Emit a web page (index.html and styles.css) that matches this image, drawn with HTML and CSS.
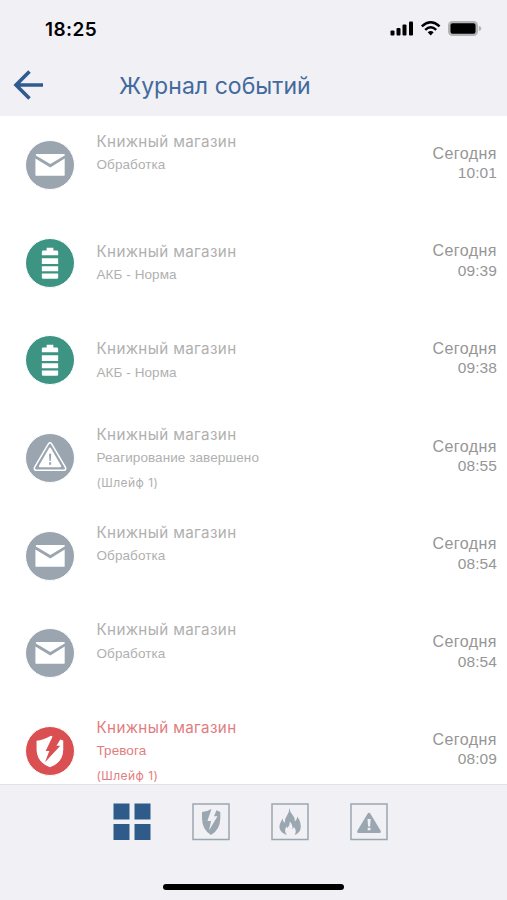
FILE: index.html
```
<!DOCTYPE html>
<html lang="ru">
<head>
<meta charset="utf-8">
<title>Журнал событий</title>
<link rel="stylesheet" href="styles.css">
</head>
<body>
<svg class="defs" width="0" height="0">
  <symbol id="mail" viewBox="0 0 50 50"><path d="M10.300 13.500h30v1.700L25.300 24 10.300 15.200z"/><path d="M9.800 18.200L25.300 27.500 40.300 18.200V35.300q0 1-1 1h-28.500q-1 0-1-1z"/></symbol>
  <symbol id="battery" viewBox="0 0 50 50"><path d="M21.500 9h7v3H32q1.500 0 1.500 1.500V17h-17v-3.500Q16.500 12 18 12h3.500zM16.500 20h17v6h-17zM16.500 28.500h17v5h-17zM16.500 36h17v4q0 1.500-1.500 1.500H18q-1.500 0-1.500-1.500z"/></symbol>
  <symbol id="warning" viewBox="0 0 50 50"><path d="M23.300 10.300Q25 8 26.700 10.300L41 34.500Q42.200 37.500 39.500 37.700H10.500Q7.800 37.500 9 34.500z" fill="none" stroke="#fff" stroke-width="1.600"/><path d="M25 14Q25.800 14 26.200 15L36.500 33Q37 34.500 35.500 34.700h-21Q13 34.500 13.500 33L23.800 15Q24.200 14 25 14z"/><path d="M23.900 20.500h2.400l-.5 7.500h-1.400zM24 29.500h2.200v2.500H24z" fill="#9aa5b0"/></symbol>
  <symbol id="shield" viewBox="0 0 50 50"><path d="M26 9.200Q17.500 14 11 14.200V24Q11.500 37 25 42 38.600 37 38.800 24V14L35.700 12.900 31.700 19.500h4L19.800 36.700 24.300 25H20.500L27.700 10z"/></symbol>
</svg>
<div class="screen">
  <header class="header">
    <div class="status">
      <span class="clock">18:25</span>
      <svg class="signals" width="94" height="20" viewBox="0 0 94 20">
        <rect x="1.500" y="11.500" width="4" height="5" rx="1"/><rect x="7.500" y="9" width="4" height="7.500" rx="1"/><rect x="13.500" y="5.500" width="4" height="11" rx="1"/><rect x="20" y="2.500" width="4" height="14" rx="1"/>
        <g fill="none" stroke="#000" stroke-width="2.400"><path d="M32.800 7.300Q41.700-.800 50.600 7.300"/><path d="M36.200 10.900Q41.700 5.700 47.200 10.900"/></g>
        <path d="M38.700 13.200Q41.700 10.600 44.700 13.200L41.700 16.500z"/>
        <rect x="59" y="2" width="30" height="15" rx="4.500" fill="#b4b4b7"/><path d="M89.800 7q2.500.4 2.500 2.500t-2.500 2.500z" fill="#b4b4b7"/><rect x="61.500" y="4.200" width="25" height="10.600" rx="2"/>
      </svg>
    </div>
    <div class="nav">
      <svg class="back" width="32" height="32" viewBox="0 0 32 32"><path d="M30 16H3M16.500 2.500L3 16 16.500 29.500" fill="none" stroke="#2f5b8f" stroke-width="3.600"/></svg>
      <h1>Журнал событий</h1>
    </div>
  </header>
  <main class="list">
    <article class="row"><svg class="icon gray"><use href="#mail"/></svg><div class="text"><h2>Книжный магазин</h2><p>Обработка</p><small></small></div><time>Сегодня<span>10:01</span></time></article>
    <article class="row"><svg class="icon green"><use href="#battery"/></svg><div class="text"><h2>Книжный магазин</h2><p>АКБ - Норма</p></div><time>Сегодня<span>09:39</span></time></article>
    <article class="row"><svg class="icon green"><use href="#battery"/></svg><div class="text"><h2>Книжный магазин</h2><p>АКБ - Норма</p></div><time>Сегодня<span>09:38</span></time></article>
    <article class="row"><svg class="icon gray"><use href="#warning"/></svg><div class="text"><h2>Книжный магазин</h2><p>Реагирование завершено</p><small>(Шлейф 1)</small></div><time>Сегодня<span>08:55</span></time></article>
    <article class="row"><svg class="icon gray"><use href="#mail"/></svg><div class="text"><h2>Книжный магазин</h2><p>Обработка</p><small></small></div><time>Сегодня<span>08:54</span></time></article>
    <article class="row"><svg class="icon gray"><use href="#mail"/></svg><div class="text"><h2>Книжный магазин</h2><p>Обработка</p><small></small></div><time>Сегодня<span>08:54</span></time></article>
    <article class="row alarm"><svg class="icon red"><use href="#shield"/></svg><div class="text"><h2>Книжный магазин</h2><p>Тревога</p><small>(Шлейф 1)</small></div><time>Сегодня<span>08:09</span></time></article>
  </main>
  <footer class="tabs">
    <nav class="tabbar">
      <svg class="tab" viewBox="0 0 38 38"><path d="M.500 .500h16v16h-16zM21.500 .500h16v16h-16zM.500 21h16v16h-16zM21.500 21h16v16h-16z" fill="#2f5b8b"/></svg>
      <svg class="tab boxed" viewBox="0 0 38 38"><rect class="frame" x="1" y="1" width="36" height="35.500"/><path d="M19.500 6Q15 8.700 10 9v6.500Q10.300 27 19 32 28 27 28.300 15.500V9L24.500 7.300 22 13.200h3.500L17 27.500 19 18h-3.600z"/></svg>
      <svg class="tab boxed" viewBox="0 0 38 38"><rect class="frame" x="1" y="1" width="36" height="35.500"/><path d="M18.300 5Q18.700 9 22 12.500 24.300 15 23.800 18.500 26.500 16.500 26.300 13.500 30.800 20 29.500 26 28.500 30 23.500 32 26.300 28 23 24L21.500 26.500Q22 22 18.800 18.500 19.200 22 16.500 25L15.500 23.500Q12.500 28 16 32 9.500 30 8.500 25 8 21 11.800 15.500 11.500 18.500 13.800 20 13.300 16 16 12.500 18.500 9 18.300 5z"/></svg>
      <svg class="tab boxed" viewBox="0 0 38 38"><rect class="frame" x="1" y="1" width="36" height="35.500"/><path d="M17.400 11Q19 8.500 20.600 11L30.500 27.500Q31.500 30 29.500 30h-21Q6.500 30 7.500 27.500z"/><path d="M17.500 16h3.200l-.6 7.500h-2zM17.700 24.700h2.800v2.600h-2.800z" fill="#f0f0f5"/></svg>
    </nav>
    <div class="home"></div>
  </footer>
</div>
</body>
</html>
```

FILE: styles.css
```
* { box-sizing: border-box; margin: 0; padding: 0; }
body { background: #fff; font-family: Inter, sans-serif; }
.defs { display: block; height: 0; }
.screen { width: 507px; height: 900px; display: flex; flex-direction: column; overflow: hidden; }
.header { height: 116px; background: #f0f0f5; flex: none; }
.status { height: 56px; padding: 2px 24px 0 45px; display: flex; align-items: center; justify-content: space-between; }
.clock { font-size: 19px; font-weight: 600; letter-spacing: .4px; }
.nav { height: 58px; padding-left: 13px; display: flex; align-items: center; }
.nav h1 { margin-left: 74px; padding-top: 2px; font-size: 23px; font-weight: 400; letter-spacing: .05px; color: #426a9c; white-space: nowrap; }
.list { height: 668px; flex: none; overflow: hidden; }
.row { height: 97.700px; display: flex; align-items: center; padding: 0 10px 0 24.500px; }
.icon { width: 50px; height: 50px; border-radius: 50%; flex: none; fill: #fff; border: .5px solid #fff; }
.gray { background: #9aa5b0; }
.green { background: #3e9482; }
.red { background: #d94f52; }
.text { margin-left: 22px; padding-top: 1px; flex: 1; color: #b0b0b0; }
.text h2, .text p, .text small { display: block; height: 24.400px; line-height: 24.400px; white-space: nowrap; font-weight: 400; }
.text h2 { font-size: 15.200px; line-height: 25.400px; letter-spacing: .35px; }
.text p { font: 13.500px/24.800px "Liberation Sans", sans-serif; letter-spacing: .08px; }
.text small { font-size: 12px; letter-spacing: .45px; }
.alarm .text { color: #e27d7f; }
time { font: 16px/19.500px "Liberation Sans", sans-serif; letter-spacing: .45px; color: #969696; text-align: right; padding-bottom: 4px; }
time span { display: block; font-size: 15.500px; line-height: 19px; letter-spacing: .1px; }
.tabs { flex: 1; background: #f0f0f5; border-top: 1px solid #e2e2e6; display: flex; flex-direction: column; align-items: center; justify-content: space-between; padding: 18px 0 10px; }
.tabbar { width: 276px; margin-right: 6px; display: flex; justify-content: space-between; }
.tab { width: 38px; height: 38px; }
.boxed { fill: #9ba7b0; }
.frame { fill: none; stroke: #9ba7b0; stroke-width: 1.500; }
.home { width: 181px; height: 6px; border-radius: 3px; background: #000; }
```
